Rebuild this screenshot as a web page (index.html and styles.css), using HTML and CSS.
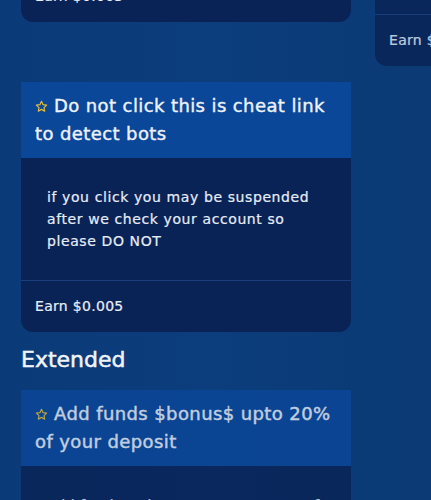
FILE: index.html
```html
<!DOCTYPE html>
<html>
<head>
<meta charset="utf-8">
<link rel="stylesheet" href="styles.css">
</head>
<body>
<main class="page">
  <section class="grid grid-first">
    <article class="card">
      <header class="card-head"><svg class="star" viewBox="0 0 24 24"><path d="M12 2.5l2.9 6.1 6.6.8-4.9 4.6 1.3 6.6L12 17.3l-5.9 3.3 1.3-6.6-4.9-4.6 6.6-.8z"/></svg>Watch video and earn money today</header>
      <div class="card-body"><p>watch the full video to earn the reward and come back here</p></div>
      <footer class="card-foot">Earn $0.005</footer>
    </article>
    <article class="card faded">
      <header class="card-head"><svg class="star" viewBox="0 0 24 24"><path d="M12 2.5l2.9 6.1 6.6.8-4.9 4.6 1.3 6.6L12 17.3l-5.9 3.3 1.3-6.6-4.9-4.6 6.6-.8z"/></svg>Visit website and stay for thirty seconds</header>
      <div class="card-body tall"><p>open the link and stay on the page for thirty seconds, do not close the tab before the timer ends</p></div>
      <footer class="card-foot">Earn $0.002</footer>
    </article>
    <article class="card">
      <header class="card-head"><svg class="star" viewBox="0 0 24 24"><path d="M12 2.5l2.9 6.1 6.6.8-4.9 4.6 1.3 6.6L12 17.3l-5.9 3.3 1.3-6.6-4.9-4.6 6.6-.8z"/></svg>Do not click this is cheat link to detect bots</header>
      <div class="card-body"><p>if you click you may be suspended after we check your account so please DO NOT</p></div>
      <footer class="card-foot">Earn $0.005</footer>
    </article>
  </section>
  <h2 class="section-title">Extended</h2>
  <section class="grid">
    <article class="card faded">
      <header class="card-head"><svg class="star" viewBox="0 0 24 24"><path d="M12 2.5l2.9 6.1 6.6.8-4.9 4.6 1.3 6.6L12 17.3l-5.9 3.3 1.3-6.6-4.9-4.6 6.6-.8z"/></svg>Add funds $bonus$ upto 20% of your deposit</header>
      <div class="card-body"><p>add funds to bonus get upto 20% of your deposit added to balance</p></div>
      <footer class="card-foot">Earn 20%</footer>
    </article>
  </section>
</main>
</body>
</html>
```

FILE: styles.css
```css
html, body {
  margin: 0;
  padding: 0;
  overflow: hidden;
  height: 100%;
}
body {
  background: linear-gradient(90deg, #0b3a78 0%, #0c3d7c 50%, #0b3a74 100%);
  font-family: "DejaVu Sans", "Liberation Sans", sans-serif;
  color: #e4eaf5;
}
.page {
  padding-left: 21px;
  width: 800px;
}
.grid {
  display: grid;
  grid-template-columns: 330px 330px;
  column-gap: 24px;
  row-gap: 16px;
  align-items: start;
}
.grid-first {
  margin-top: -228px;
}
.card {
  background: #0a2356;
  border-radius: 0 0 12px 12px;
}
.faded {
  opacity: 0.8;
}
.card-head {
  background: #0a4799;
  padding: 10px 14px;
  font-size: 18px;
  letter-spacing: 0.4px;
  font-weight: normal;
  -webkit-text-stroke: 0.4px #eef2fa;
  line-height: 28px;
  height: 56px;
  overflow: hidden;
  color: #eef2fa;
}
.star {
  width: 13px;
  height: 13px;
  margin-right: 6px;
  vertical-align: -1px;
  fill: none;
  stroke: #e3bf3a;
  stroke-width: 2.2;
  stroke-linejoin: round;
}
.card-body {
  padding: 28px 26px;
  height: 66px;
  overflow: hidden;
}
.card-body.tall {
  height: 110px;
}
.card-body p {
  margin: 0;
  font-size: 14px;
  letter-spacing: 0.6px;
  line-height: 22px;
  -webkit-text-stroke: 0.2px #e6ecf6;
  color: #e6ecf6;
}
.card-foot {
  border-top: 1px solid #1b3f7c;
  padding: 14px 14px 15px;
  font-size: 14px;
  letter-spacing: 0.3px;
  line-height: 22px;
  -webkit-text-stroke: 0.2px #e8edf6;
  color: #e8edf6;
}
.section-title {
  margin: 13px 0 15px;
  font-size: 22px;
  line-height: 30px;
  font-weight: normal;
  -webkit-text-stroke: 0.5px #f0f4fa;
  color: #f0f4fa;
}
```
